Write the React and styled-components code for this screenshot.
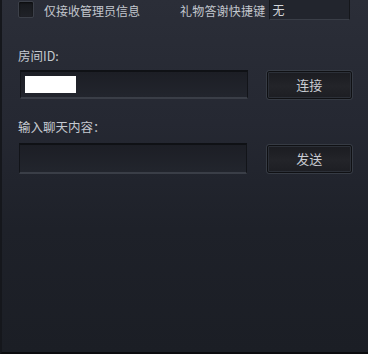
import React from "react";
import styled, { createGlobalStyle } from "styled-components";

const GlobalStyle = createGlobalStyle`
  html, body {
    margin: 0;
    padding: 0;
    background: #ffffff;
  }
  * {
    box-sizing: border-box;
  }
`;

const Panel = styled.div`
  width: 368px;
  height: 354px;
  background: linear-gradient(180deg, #2b2e38 0%, #252832 35%, #1e2129 65%, #1b1e25 100%);
  border-left: 2px solid #15171c;
  border-bottom: 2px solid #0b0c0e;
  font-family: "Noto Sans CJK SC", "Noto Sans", sans-serif;
  font-size: 12px;
  color: #c3c7ce;
  display: flex;
  flex-direction: column;
  padding: 0 16px 0 16px;
`;

const TopRow = styled.div`
  height: 21px;
  display: flex;
  align-items: center;
`;

const Check = styled.span`
  width: 16px;
  height: 17px;
  margin-top: -3px;
  border: 1px solid #3c4049;
  border-radius: 2px;
  background: linear-gradient(180deg, #17191d, #202228);
  box-shadow: inset 0 1px 2px rgba(0, 0, 0, 0.6);
`;

const CheckLabel = styled.span`
  margin-left: 10px;
  width: 136px;
`;

const GiftLabel = styled.span`
  letter-spacing: 0.2px;
`;

const GiftBox = styled.div`
  margin-left: 4px;
  margin-top: -2px;
  width: 81px;
  height: 21px;
  background: #22252d;
  border: 1px solid #15171b;
  border-bottom-color: #3a3e47;
  padding-left: 2px;
  display: flex;
  align-items: center;
  color: #d2d5da;
`;

const Label = styled.div`
  margin-top: ${(p) => p.$top}px;
  font-size: 12.5px;
  line-height: 16px;
  color: #c5c9d0;
`;

const Row = styled.div`
  display: flex;
  align-items: center;
  margin-top: ${(p) => p.$top}px;
`;

const Field = styled.div`
  width: 229px;
  height: ${(p) => p.$h}px;
  margin-left: ${(p) => p.$left}px;
  background: linear-gradient(180deg, #1c1e25, #22252d);
  border: 1px solid #121419;
  border-top: 2px solid #0f1115;
  border-bottom: 2px solid #3a3e47;
  padding: 3px 4px;
  display: flex;
  align-items: center;
`;

const Filled = styled.div`
  width: 51px;
  height: 17px;
  background: #ffffff;
`;

const Button = styled.button`
  margin-left: ${(p) => p.$gap}px;
  width: 86px;
  height: 28px;
  border: 1px solid #0f1013;
  border-radius: 2px;
  outline: 1px solid #363b44;
  background: linear-gradient(180deg, #1b1c21 0%, #232429 55%, #1d1e23 100%);
  box-shadow: inset 0 0 0 1px #2c3038;
  color: #c9ccd3;
  font-family: "Noto Sans CJK SC", "Noto Sans", sans-serif;
  font-size: 13px;
  padding: 0;
  cursor: pointer;
`;

export default function App() {
  return (
    <>
      <GlobalStyle />
      <Panel>
        <TopRow>
          <Check />
          <CheckLabel>仅接收管理员信息</CheckLabel>
          <GiftLabel>礼物答谢快捷键</GiftLabel>
          <GiftBox>无</GiftBox>
        </TopRow>
        <Label $top={27}>房间ID:</Label>
        <Row $top={6}>
          <Field $h={29} $left={2}>
            <Filled />
          </Field>
          <Button $gap={19}>连接</Button>
        </Row>
        <Label $top={20}>输入聊天内容：</Label>
        <Row $top={8}>
          <Field $h={31} $left={1}>
          </Field>
          <Button $gap={20}>发送</Button>
        </Row>
      </Panel>
    </>
  );
}
